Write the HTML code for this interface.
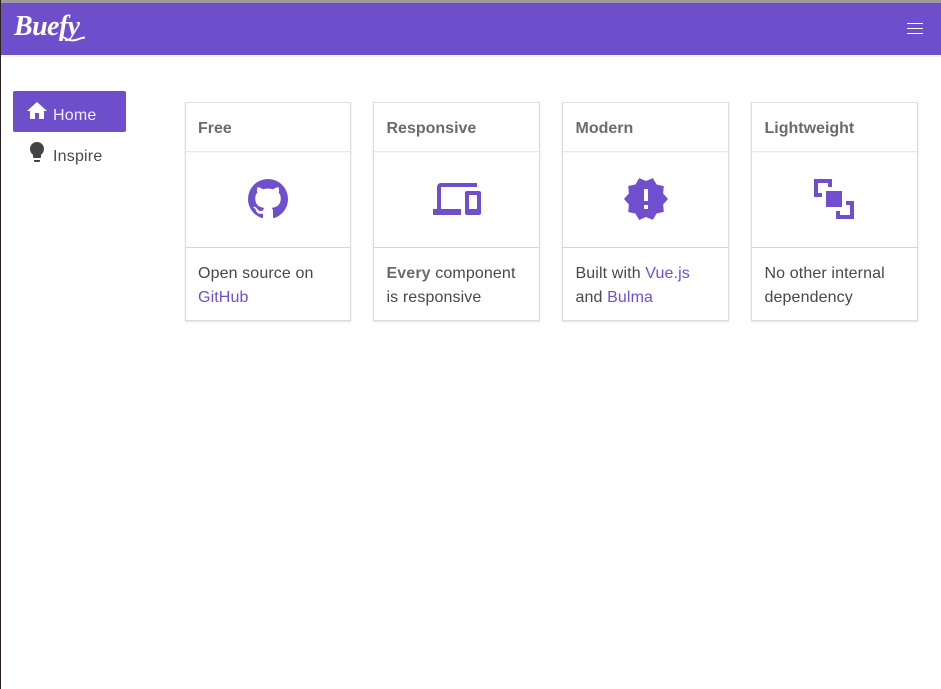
<!DOCTYPE html>
<html><head><meta charset="utf-8">
<style>
html,body{margin:0;padding:0;background:#fff;}
body{width:941px;height:689px;position:relative;overflow:hidden;font-family:"Liberation Sans",sans-serif;font-size:16px;color:#4a4a4a;}
.abs{position:absolute;}
.card{position:absolute;top:102px;height:219px;box-sizing:border-box;background:#fff;border:1px solid #dcdcdc;border-top-color:#e2e2e2;box-shadow:0 1px 2px rgba(10,10,10,.12);}
.hd{position:absolute;left:12px;top:15.5px;font-weight:bold;color:#6b6b6b;line-height:20px;white-space:nowrap;}
.l1{position:absolute;left:0;right:0;top:48px;height:1px;background:#e8e8e8;box-shadow:0 1px 1px rgba(10,10,10,.05);}
.l2{position:absolute;left:0;right:0;top:144px;height:1px;background:#d6d6d6;}
.tx{position:absolute;left:12px;top:159px;line-height:24px;white-space:nowrap;letter-spacing:.12px;color:#484848;}
.n .hd,.n .tx{left:12.5px;}
.tx a{color:#7050cf;text-decoration:none;}
.tx b{color:#6b6b6b;}
svg{position:absolute;display:block;fill:#704fce;}
</style></head>
<body>
<div class="abs" style="left:0;top:0;width:941px;height:3px;background:#9c9c9c;"></div>
<div class="abs" style="left:0;top:3px;width:941px;height:52px;background:#6f4ecc;"></div>
<div class="abs" style="left:0;top:55px;width:941px;height:2px;background:#f3f3f3;"></div>
<div class="abs" style="left:0;top:0;width:1px;height:689px;background:#2b1f1f;"></div>
<div class="abs" style="left:14px;top:10px;color:#fff;font-family:'Liberation Serif',serif;font-style:italic;font-weight:bold;font-size:28px;line-height:34px;letter-spacing:-.6px;">Buefy</div>
<svg style="left:60px;top:30px;fill:none;stroke:#fff;stroke-width:2;" width="28" height="14" viewBox="0 0 28 14"><path d="M3 7C7 10 12 11 16 10C19 9 22 7.5 25 7.5"/></svg>
<div class="abs" style="left:907px;top:23px;width:16px;height:1px;background:#fff;"></div>
<div class="abs" style="left:907px;top:28px;width:16px;height:1px;background:#fff;"></div>
<div class="abs" style="left:907px;top:33px;width:16px;height:1px;background:#fff;"></div>

<div class="abs" style="left:13px;top:91px;width:113px;height:41px;background:#6f4ecc;border-radius:2px;"></div>
<svg style="left:25px;top:99px;fill:#fff;" width="24" height="24" viewBox="0 0 24 24"><path d="M10,20V14H14V20H19V12H22L12,3L2,12H5V20H10Z"/></svg>
<div class="abs" style="left:53px;top:106px;color:#f3eefc;line-height:20px;letter-spacing:.2px;">Home</div>
<svg style="left:25px;top:140px;fill:#444;" width="24" height="24" viewBox="0 0 24 24"><path d="M12,2A7,7 0 0,0 5,9C5,11.38 6.19,13.47 8,14.74V17A1,1 0 0,0 9,18H15A1,1 0 0,0 16,17V14.74C17.81,13.47 19,11.38 19,9A7,7 0 0,0 12,2M9,21A1,1 0 0,0 10,22H14A1,1 0 0,0 15,21V20H9V21Z"/></svg>
<div class="abs" style="left:53px;top:147px;line-height:20px;letter-spacing:.2px;">Inspire</div>

<div class="card" style="left:185px;width:166px;">
<div class="hd">Free</div><div class="l1"></div><div class="l2"></div>
<div class="tx">Open source on<br><a>GitHub</a></div>
</div>
<div class="card n" style="left:373px;width:167px;">
<div class="hd">Responsive</div><div class="l1"></div><div class="l2"></div>
<div class="tx"><b>Every</b> component<br>is responsive</div>
</div>
<div class="card n" style="left:562px;width:167px;">
<div class="hd">Modern</div><div class="l1"></div><div class="l2"></div>
<div class="tx">Built with <a>Vue.js</a><br>and <a>Bulma</a></div>
</div>
<div class="card n" style="left:751px;width:167px;">
<div class="hd">Lightweight</div><div class="l1"></div><div class="l2"></div>
<div class="tx">No other internal<br>dependency</div>
</div>

<svg style="left:244px;top:175px;" width="48" height="48" viewBox="0 0 24 24"><path d="M12,2A10,10 0 0,0 2,12C2,16.42 4.87,20.17 8.84,21.5C9.34,21.58 9.5,21.27 9.5,21C9.5,20.77 9.5,20.14 9.5,19.31C6.73,19.91 6.14,17.97 6.14,17.97C5.68,16.81 5.03,16.5 5.03,16.5C4.12,15.88 5.1,15.9 5.1,15.9C6.1,15.97 6.63,16.93 6.63,16.93C7.5,18.45 8.97,18 9.54,17.76C9.63,17.11 9.89,16.67 10.17,16.42C7.95,16.17 5.62,15.31 5.62,11.5C5.62,10.39 6,9.5 6.65,8.79C6.55,8.54 6.2,7.5 6.75,6.15C6.75,6.15 7.59,5.88 9.5,7.17C10.29,6.95 11.15,6.84 12,6.84C12.85,6.84 13.71,6.95 14.5,7.17C16.41,5.88 17.25,6.15 17.25,6.15C17.8,7.5 17.45,8.54 17.35,8.79C18,9.5 18.38,10.39 18.38,11.5C18.38,15.32 16.04,16.16 13.81,16.41C14.17,16.72 14.5,17.33 14.5,18.26C14.5,19.6 14.5,20.68 14.5,21C14.5,21.27 14.66,21.59 15.17,21.5C19.14,20.16 22,16.42 22,12A10,10 0 0,0 12,2Z"/></svg>
<svg style="left:433px;top:175px;" width="48" height="48" viewBox="0 0 24 24"><path d="M22,17H18V10H22M23,8H17A1,1 0 0,0 16,9V19A1,1 0 0,0 17,20H23A1,1 0 0,0 24,19V9A1,1 0 0,0 23,8M4,6H22V4H4A2,2 0 0,0 2,6V17H0V20H14V17H4V6Z"/></svg>
<svg style="left:622px;top:175px;" width="48" height="48" viewBox="0 0 24 24"><path d="M23,12L20.56,9.22L20.9,5.54L17.29,4.72L15.4,1.54L12,3L8.6,1.54L6.71,4.72L3.1,5.53L3.44,9.21L1,12L3.44,14.78L3.1,18.47L6.71,19.29L8.6,22.47L12,21L15.4,22.46L17.29,19.28L20.9,18.46L20.56,14.78L23,12M13,17H11V15H13V17M13,13H11V7H13V13Z"/></svg>
<svg style="left:810px;top:175px;" width="48" height="48" viewBox="0 0 24 24"><path d="M2,2H11V6H9V4H4V9H6V11H2V2M22,13V22H13V18H15V20H20V15H18V13H22M8,8H16V16H8V8Z"/></svg>
</body></html>
